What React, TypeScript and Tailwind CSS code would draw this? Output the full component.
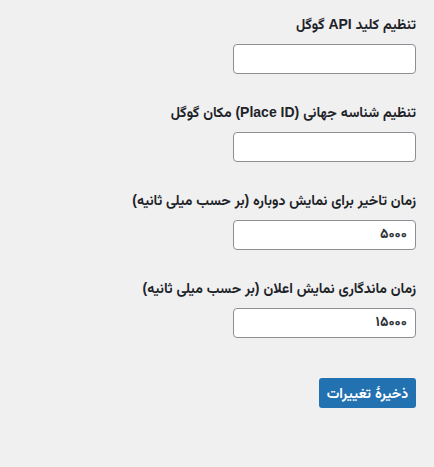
import React from 'react'

const fields = [
  { label: 'تنظیم کلید API گوگل', value: '' },
  { label: 'تنظیم شناسه جهانی (Place ID) مکان گوگل', value: '' },
  { label: 'زمان تاخیر برای نمایش دوباره (بر حسب میلی ثانیه)', value: '۵۰۰۰' },
  { label: 'زمان ماندگاری نمایش اعلان (بر حسب میلی ثانیه)', value: '۱۵۰۰۰' },
]

export default function App() {
  return (
    <div
      dir="rtl"
      className="min-h-[467px] w-[434px] bg-[#f0f0f1] pt-[14px] pr-[18px] text-[#1d2327]"
      style={{ fontFamily: '"Liberation Sans", "Vazirmatn", "Noto Sans Arabic", "Noto Naskh Arabic", "DejaVu Sans", sans-serif' }}
    >
      {fields.map((f) => (
        <div key={f.label} className="mb-[28px]">
          <label className="block h-5 mb-[10px] text-[14px] leading-5 font-bold whitespace-nowrap">
            {f.label}
          </label>
          <input
            type="text"
            defaultValue={f.value}
            className="block h-[30px] w-[183px] rounded-[4px] border border-[#8c8f94] bg-white px-2 text-[14px] font-bold text-[#2c3338] outline-none"
          />
        </div>
      ))}
      <button className="mt-[12px] h-[30px] w-[97px] rounded-[3px] bg-[#2271b1] text-[14px] font-bold text-white">
        ذخیرهٔ تغییرات
      </button>
    </div>
  )
}
